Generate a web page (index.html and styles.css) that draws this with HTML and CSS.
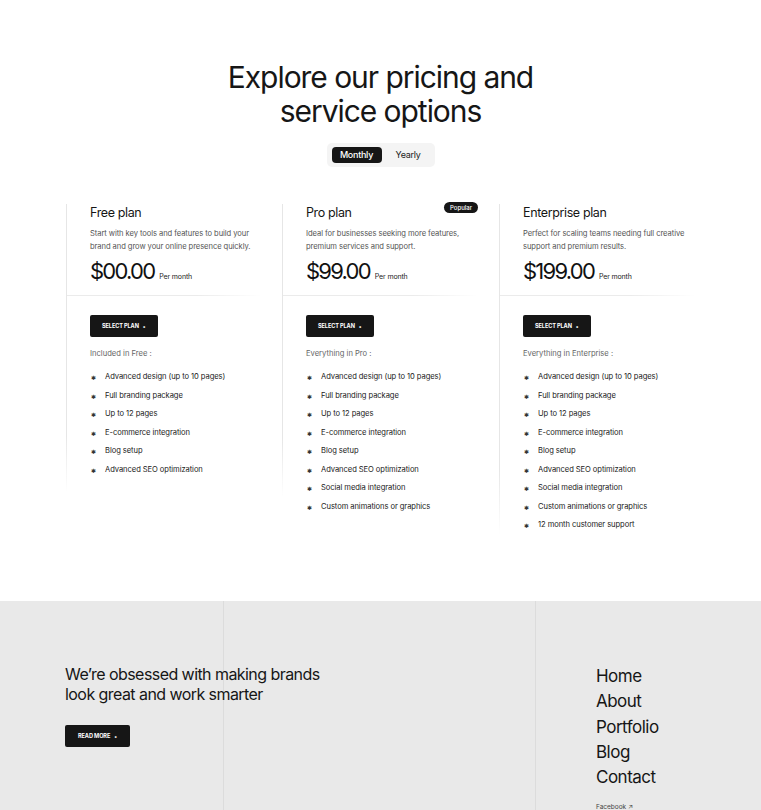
FILE: index.html
```html
<!DOCTYPE html>
<html lang="en">
<head>
<meta charset="utf-8">
<title>Pricing</title>
<link rel="stylesheet" href="styles.css">
</head>
<body>
<section class="pricing">
  <h1 class="title">Explore our pricing and<br>service options</h1>
  <div class="toggle">
    <span class="toggle-opt active">Monthly</span>
    <span class="toggle-opt">Yearly</span>
  </div>
  <div class="plans">
    <div class="plan plan-short">
      <div class="plan-head">
        <h2 class="plan-name">Free plan</h2>
        <p class="plan-desc">Start with key tools and features to build your brand and grow your online presence quickly.</p>
        <div class="price"><span class="amount">$00.00</span><span class="per">Per month</span></div>
      </div>
      <div class="plan-body">
        <a class="btn">SELECT PLAN <span class="dot">•</span></a>
        <p class="incl">Included in Free :</p>
        <ul class="features">
          <li>Advanced design (up to 10 pages)</li>
          <li>Full branding package</li>
          <li>Up to 12 pages</li>
          <li>E-commerce integration</li>
          <li>Blog setup</li>
          <li>Advanced SEO optimization</li>
        </ul>
      </div>
    </div>
    <div class="plan plan-mid">
      <span class="badge">Popular</span>
      <div class="plan-head">
        <h2 class="plan-name">Pro plan</h2>
        <p class="plan-desc">Ideal for businesses seeking more features, premium services and support.</p>
        <div class="price"><span class="amount">$99.00</span><span class="per">Per month</span></div>
      </div>
      <div class="plan-body">
        <a class="btn">SELECT PLAN <span class="dot">•</span></a>
        <p class="incl">Everything in Pro :</p>
        <ul class="features">
          <li>Advanced design (up to 10 pages)</li>
          <li>Full branding package</li>
          <li>Up to 12 pages</li>
          <li>E-commerce integration</li>
          <li>Blog setup</li>
          <li>Advanced SEO optimization</li>
          <li>Social media integration</li>
          <li>Custom animations or graphics</li>
        </ul>
      </div>
    </div>
    <div class="plan plan-long">
      <div class="plan-head">
        <h2 class="plan-name">Enterprise plan</h2>
        <p class="plan-desc">Perfect for scaling teams needing full creative support and premium results.</p>
        <div class="price"><span class="amount">$199.00</span><span class="per">Per month</span></div>
      </div>
      <div class="plan-body">
        <a class="btn">SELECT PLAN <span class="dot">•</span></a>
        <p class="incl">Everything in Enterprise :</p>
        <ul class="features">
          <li>Advanced design (up to 10 pages)</li>
          <li>Full branding package</li>
          <li>Up to 12 pages</li>
          <li>E-commerce integration</li>
          <li>Blog setup</li>
          <li>Advanced SEO optimization</li>
          <li>Social media integration</li>
          <li>Custom animations or graphics</li>
          <li>12 month customer support</li>
        </ul>
      </div>
    </div>
  </div>
</section>
<footer class="footer">
  <div class="footer-left">
    <h3 class="footer-title">We’re obsessed with making brands<br>look great and work smarter</h3>
    <a class="btn btn-read">READ MORE <span class="dot">•</span></a>
  </div>
  <nav class="footer-nav">
    <a>Home</a>
    <a>About</a>
    <a>Portfolio</a>
    <a>Blog</a>
    <a>Contact</a>
    <span class="social">Facebook ↗</span>
  </nav>
</footer>
</body>
</html>
```
FILE: styles.css
```css
* { box-sizing: border-box; margin: 0; padding: 0; }
html, body { background: #fff; }
body {
  font-family: Inter, "Noto Sans", sans-serif;
  color: #161616;
  width: 761px;
  height: 810px;
  overflow: hidden;
}
.pricing {
  padding-top: 60px;
  height: 601px;
}
.title {
  text-align: center;
  font-weight: 400;
  font-size: 30px;
  line-height: 34px;
  letter-spacing: -0.035em;
  color: #161616;
}
.toggle {
  display: flex;
  width: 108px;
  height: 24px;
  margin: 15px auto 0;
  padding: 4px 5px;
  background: #f4f4f4;
  border-radius: 5px;
  gap: 6px;
}
.toggle-opt {
  font-size: 9px;
  line-height: 16px;
  letter-spacing: -0.03em;
  padding: 0 8px;
  border-radius: 4px;
  color: #222;
}
.toggle-opt.active {
  background: #161616;
  color: #fff;
  width: 50px;
  text-align: center;
  padding: 0;
  font-weight: 500;
}
.plans {
  display: grid;
  grid-template-columns: 216px 217px 217px;
  padding-left: 66px;
  margin-top: 37px;
}
.plan {
  position: relative;
  border-left: 1px solid transparent;
  border-image: linear-gradient(to bottom, #e6e6e6 0%, #e6e6e6 80%, rgba(230,230,230,0) 100%) 1;
}
.plan-short { height: 288px; }
.plan-mid { height: 292px; }
.plan-long { height: 330px; }
.plan-head {
  padding: 1px 24px 11px 23px;
  border-bottom: 1px solid transparent;
  border-image: linear-gradient(to right, #ebebeb 0%, #ebebeb 60%, rgba(235,235,235,0) 90%) 1;
}
.plan-name {
  font-weight: 400;
  font-size: 12.5px;
  line-height: 16px;
  letter-spacing: -0.03em;
  color: #161616;
}
.plan-desc {
  margin-top: 6px;
  font-size: 7.6px;
  line-height: 13px;
  color: #555;
  letter-spacing: -0.01em;
}
.price {
  display: flex;
  align-items: baseline;
  gap: 5px;
  margin-top: 5px;
  height: 26px;
}
.amount {
  font-size: 22px;
  line-height: 26px;
  letter-spacing: -0.08em;
  color: #111;
}
.per {
  font-size: 7px;
  line-height: 10px;
  letter-spacing: -0.02em;
  color: #222;
}
.badge {
  position: absolute;
  top: -2px;
  right: 21px;
  background: #161616;
  color: #fff;
  font-size: 6px;
  line-height: 11px;
  padding: 0 6px;
  border-radius: 6px;
  font-weight: 500;
}
.plan-body {
  padding: 19px 24px 0 23px;
}
.btn {
  display: flex;
  width: fit-content;
  align-items: center;
  gap: 4px;
  height: 22px;
  padding: 0 12px;
  background: #161616;
  color: #fff;
  font-size: 5.6px;
  font-weight: 700;
  letter-spacing: -0.02em;
  border-radius: 2px;
}
.dot { font-size: 6px; }
.incl {
  margin-top: 11px;
  font-size: 7.6px;
  line-height: 12px;
  color: #666;
}
.features {
  list-style: none;
  margin-top: 11px;
  display: flex;
  flex-direction: column;
  gap: 6.5px;
}
.features li {
  position: relative;
  padding-left: 15px;
  font-size: 7.6px;
  line-height: 12px;
  color: #222;
  letter-spacing: -0.01em;
}
.features li::before {
  content: "✱";
  position: absolute;
  left: 1px;
  top: 0;
  font-size: 6px;
  line-height: 13px;
  color: #333;
}
.footer {
  height: 209px;
  background-color: #e9e9e9;
  background-image:
    linear-gradient(#dcdcdc, #dcdcdc),
    linear-gradient(#dcdcdc, #dcdcdc);
  background-size: 1px 100%, 1px 100%;
  background-position: 223px 0, 535px 0;
  background-repeat: no-repeat;
  display: flex;
  padding: 63px 0 0 65px;
}
.footer-left { width: 531px; }
.footer-title {
  font-weight: 400;
  font-size: 16px;
  line-height: 20px;
  letter-spacing: -0.035em;
  color: #161616;
}
.btn-read {
  margin-top: 21px;
  height: 22px;
  padding: 0 13px;
}
.footer-nav {
  display: flex;
  flex-direction: column;
}
.footer-nav a {
  font-size: 17px;
  line-height: 25.3px;
  letter-spacing: -0.03em;
  color: #161616;
}
.social {
  margin-top: 13px;
  font-size: 6.5px;
  line-height: 9px;
  color: #444;
}
```
